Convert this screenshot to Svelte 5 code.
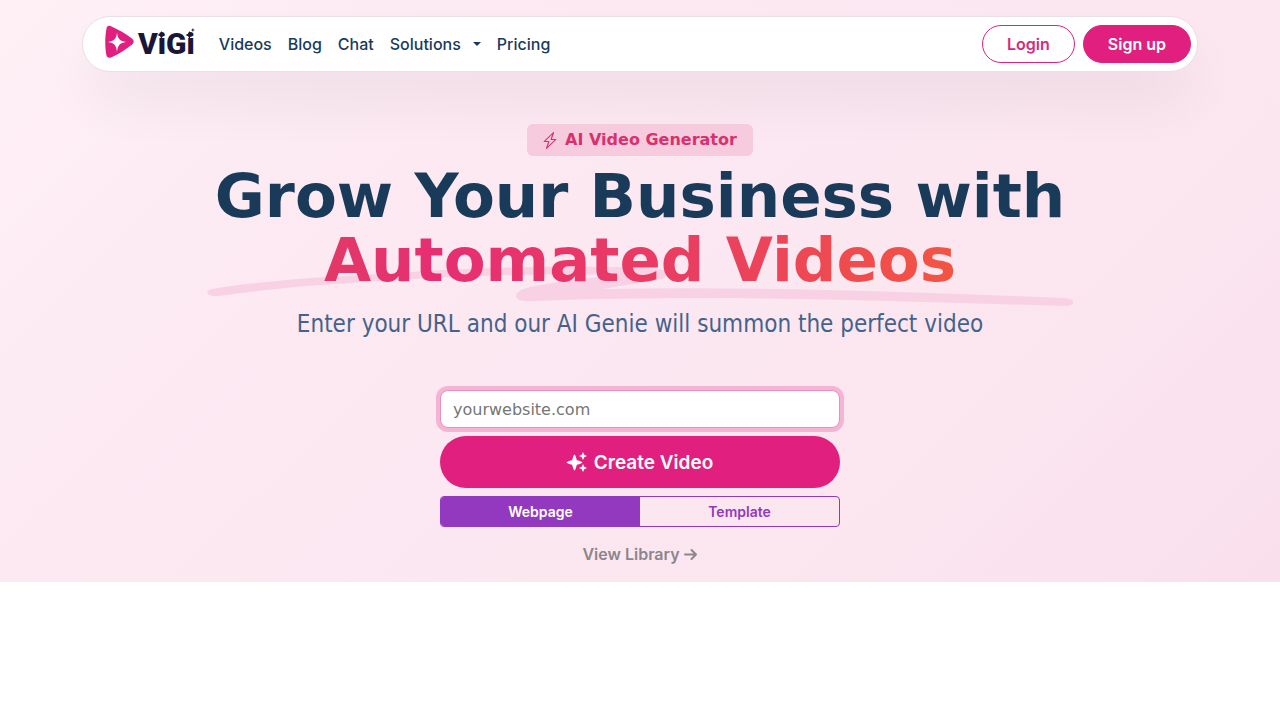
<script lang="ts">
  type Mode = 'webpage' | 'template';

  let mode: Mode = 'webpage';
  let url = '';

  const modes: { id: Mode; label: string }[] = [
    { id: 'webpage', label: 'Webpage' },
    { id: 'template', label: 'Template' }
  ];
</script>

<div class="hero">
  <header class="navbar">
    <a class="brand" href="#home" aria-label="ViGi home">
      <svg class="brand-mark" viewBox="0 0 30 34" aria-hidden="true">
        <path d="M2 3.5C2.3.8 4.2.2 6.5 1.2 14 4.5 21 8.6 27.5 13.500c2.300 1.700 2.300 4.200.1 6C21 24.800 14 29 7 32.300c-2.800 1.200-4.700.3-5.200-2.500C.4 22 .4 11.500 2 3.500z" fill="#e01f7f" />
        <path d="M12.500 7.500c.7 6.200 2.700 8.500 9 9.500-6.300 1-8.300 3.300-9 10-.7-6.700-2.700-9-9-10 6.300-1 8.300-3.300 9-9.500z" fill="#fff" />
      </svg>
      <span class="brand-name">
        ViGi
        <svg class="brand-stars" viewBox="0 0 56 32" aria-hidden="true">
          <path d="M23 3l1.200 2.800L27 7l-2.800 1.200L23 11l-1.200-2.800L19 7l2.800-1.200zM51 3l1.200 2.800L55 7l-2.800 1.200L51 11l-1.200-2.800L47 7l2.800-1.200zM54.500 0l.6 1.400 1.400.6-1.400.6-.6 1.400-.6-1.400-1.400-.6 1.400-.6z" />
        </svg>
      </span>
    </a>
    <nav>
      <a href="#videos">Videos</a>
      <a href="#blog">Blog</a>
      <a href="#chat">Chat</a>
      <a class="dropdown" href="#solutions">Solutions</a>
      <a href="#pricing">Pricing</a>
    </nav>
    <div class="account">
      <a class="pill" href="#login">Login</a>
      <a class="pill filled" href="#signup">Sign up</a>
    </div>
  </header>

  <main>
    <div class="badge">
      <svg viewBox="2 0 12 16" preserveAspectRatio="none" aria-hidden="true">
        <path d="M11.251.068a.5.5 0 0 1 .227.58L9.677 6.5H13a.5.5 0 0 1 .364.843l-8 8.5a.5.5 0 0 1-.842-.49L6.323 9.5H3a.5.5 0 0 1-.364-.843l8-8.5a.5.5 0 0 1 .615-.09zM4.157 8.5H7a.5.5 0 0 1 .478.647L6.11 13.59l5.732-6.09H9a.5.5 0 0 1-.478-.647L9.89 2.41 4.157 8.5z" />
      </svg>
      AI Video Generator
    </div>

    <h1>
      Grow Your Business with
      <span class="accent">
        <svg class="swoosh" viewBox="0 0 866 44" preserveAspectRatio="none" aria-hidden="true">
          <path d="M5 24C60 15 130 11 190 8 260 3 330 1 400 2c25 0 45 1 56 3 7 2 4 7-2 9-18 4-38 6-58 10 150-3 310 3 460 9 14 1 13 8 1 8-180-5-340-12-530-5-14 1-19-2-18-6 2-8 28-11 58-15l40-5C320 7 200 13 100 21 65 24 35 28 10 31 1 32-4 26 5 24z" />
        </svg>
        <span class="gradient">Automated Videos</span>
      </span>
    </h1>

    <p class="lead">Enter your URL and our AI Genie will summon the perfect video</p>

    <form on:submit|preventDefault>
      <input type="text" bind:value={url} placeholder="yourwebsite.com" aria-label="Website URL" />
      <button class="create" type="submit">
        <svg viewBox="0 0 20 20" aria-hidden="true">
          <path d="M7.500 2.500Q8.600 3 9.800 8.200 15 9.400 15.500 10.500 15 11.600 9.800 12.800 8.600 18 7.500 18.500 6.400 18 5.200 12.800 0 11.600-.5 10.500 0 9.400 5.200 8.200 6.400 3 7.500 2.500zM16 0l1.300 2.700L20 4l-2.700 1.300L16 8l-1.300-2.700L12 4l2.700-1.300zM16 12l1.300 2.700L20 16l-2.700 1.300L16 20l-1.300-2.700L12 16l2.700-1.300z" />
        </svg>
        Create Video
      </button>
      <div class="modes" role="group" aria-label="Video source">
        {#each modes as item}
          <button type="button" class:active={mode === item.id} aria-pressed={mode === item.id} on:click={() => (mode = item.id)}>
            {item.label}
          </button>
        {/each}
      </div>
    </form>

    <a class="library" href="#library">
      View Library
      <svg viewBox="0 0 14 14" aria-hidden="true">
        <path d="M1 7.500h11M7.500 3L12 7.500 7.500 12" />
      </svg>
    </a>
  </main>
</div>

<style>
  :global(body) {
    margin: 0;
    background: #fff;
    font-family: "DejaVu Sans", sans-serif;
    font-size: 16px;
    color: #1a3a5a;
  }
  .hero {
    padding: 16px;
    background: linear-gradient(135deg, #fff0f6 0%, #fce9f2 30%, #fbe6f0 75%, #f9dfec 100%);
  }
  a {
    color: inherit;
    text-decoration: none;
  }
  button {
    cursor: pointer;
    font-family: Inter, sans-serif;
    font-weight: 600;
  }
  .navbar {
    display: flex;
    align-items: center;
    box-sizing: border-box;
    max-width: 1116px;
    min-height: 56px;
    margin: 0 auto;
    padding: 8px 6px 8px 21px;
    border: 1px solid #eadfe5;
    border-radius: 28px;
    background: #fff;
    box-shadow: 0 32px 56px -4px rgba(0, 0, 0, 0.06);
    font-family: Inter, sans-serif;
  }
  .brand {
    display: flex;
    align-items: center;
    gap: 3px;
  }
  .brand-mark {
    width: 31px;
    height: 34px;
    margin-bottom: 4px;
  }
  .brand-name {
    position: relative;
    font-family: Roboto, sans-serif;
    font-size: 30px;
    line-height: 32px;
    font-weight: 900;
    color: #1a1637;
  }
  .brand-stars {
    position: absolute;
    top: 0;
    left: 0;
    width: 100%;
    height: 32px;
    overflow: visible;
    fill: currentColor;
  }
  nav {
    display: flex;
    flex-wrap: wrap;
    gap: 16px;
    margin-left: 24px;
    font-weight: 500;
    line-height: 24px;
  }
  .dropdown {
    display: flex;
    align-items: center;
    gap: 12px;
  }
  .dropdown::after {
    content: "";
    border: 4px solid transparent;
    border-top-color: currentColor;
    border-bottom: 0;
  }
  .account {
    display: flex;
    gap: 8px;
    margin-left: auto;
  }
  .pill {
    padding: 6px 24px;
    border: 1px solid #e01f7f;
    border-radius: 20px;
    color: #d62a7e;
    font-weight: 600;
    line-height: 24px;
  }
  .pill.filled {
    background: #e01f7f;
    color: #fff;
  }
  main {
    display: flex;
    flex-direction: column;
    align-items: center;
    padding-top: 52px;
    text-align: center;
  }
  .badge {
    display: flex;
    align-items: center;
    gap: 8px;
    padding: 4px 16px;
    border-radius: 6px;
    background: #f6cbdd;
    color: #d9306e;
    font-weight: 700;
    line-height: 24px;
  }
  .badge svg {
    width: 14px;
    height: 17px;
    fill: currentColor;
  }
  h1 {
    margin: 8px 0 16px;
    font-size: 61px;
    line-height: 64px;
    font-weight: 700;
  }
  .accent {
    display: block;
    position: relative;
  }
  .swoosh {
    position: absolute;
    left: -8px;
    top: 37px;
    width: calc(100% + 16px);
    height: 44px;
    fill: #f8d2e4;
  }
  .gradient {
    position: relative;
    background: linear-gradient(90deg, #e23a68 0%, #e62e72 18%, #ea3f60 60%, #f25543 100%);
    background-clip: text;
    -webkit-background-clip: text;
    color: transparent;
  }
  .lead {
    margin: 0 0 50px;
    color: #45628a;
    font-family: "DejaVu Sans Condensed", "DejaVu Sans", sans-serif;
    font-size: 24px;
    line-height: 32px;
  }
  form {
    display: flex;
    flex-direction: column;
    gap: 8px;
    width: 100%;
    max-width: 400px;
  }
  input {
    box-sizing: border-box;
    height: 38px;
    padding: 6px 12px;
    border: 1px solid #e98fbf;
    border-radius: 8px;
    outline: none;
    background: #fff;
    box-shadow: 0 0 0 4px #f5b4d3;
    font: inherit;
  }
  input::placeholder {
    color: #757575;
  }
  .create {
    display: flex;
    align-items: center;
    justify-content: center;
    gap: 7px;
    height: 52px;
    border: 0;
    border-radius: 26px;
    background: #e01f7f;
    color: #fff;
    font-size: 19px;
  }
  .create svg {
    width: 20px;
    height: 20px;
    overflow: visible;
    fill: currentColor;
  }
  .modes {
    display: flex;
    overflow: hidden;
    border: 1px solid #9239bf;
    border-radius: 4px;
  }
  .modes button {
    flex: 1;
    padding: 4px 8px;
    border: 0;
    background: none;
    color: #9239bf;
    font-size: 14px;
    line-height: 21px;
  }
  .modes button.active {
    background: #9239bf;
    color: #fff;
  }
  .library {
    display: flex;
    align-items: center;
    gap: 4px;
    margin-top: 15px;
    color: #8d858b;
    font-family: Inter, sans-serif;
    font-weight: 600;
    line-height: 24px;
  }
  .library svg {
    width: 14px;
    height: 14px;
    fill: none;
    stroke: currentColor;
    stroke-width: 2;
    stroke-linecap: round;
    stroke-linejoin: round;
  }
</style>
